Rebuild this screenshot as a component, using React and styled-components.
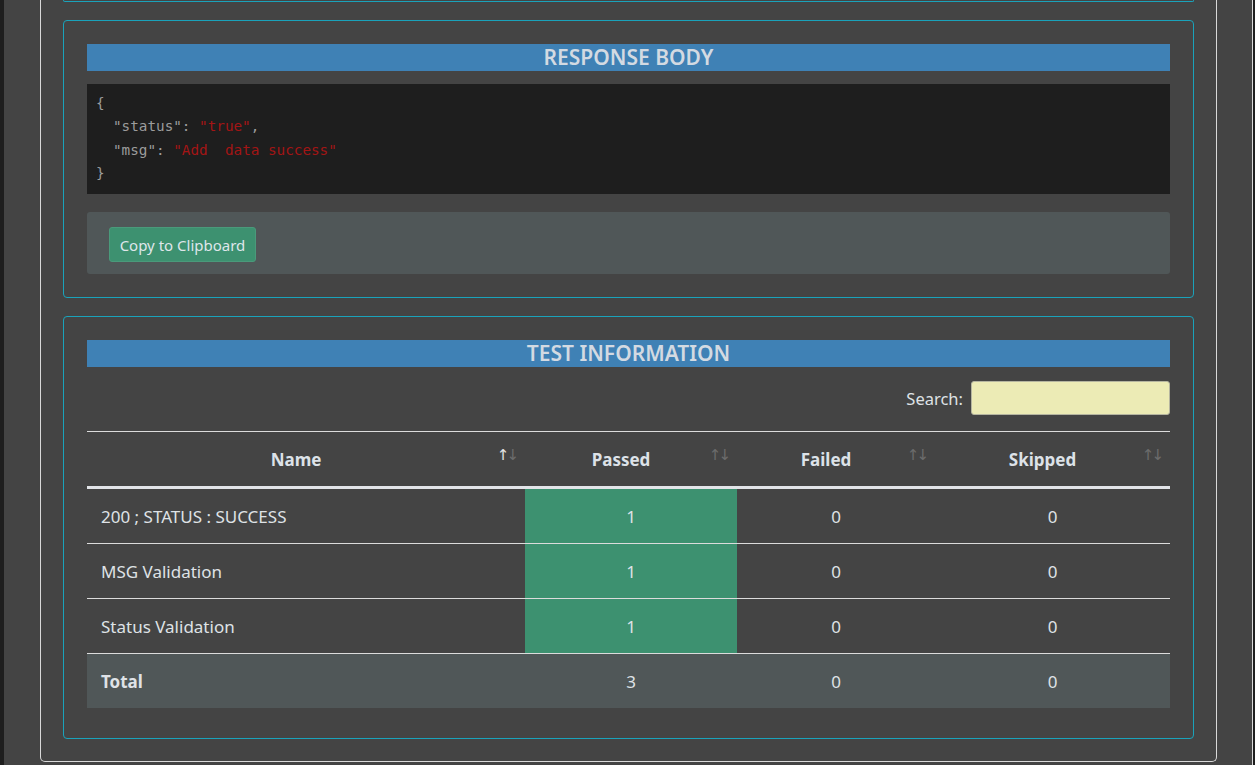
import styled, { createGlobalStyle } from "styled-components";

const GlobalStyle = createGlobalStyle`
    body {
        margin: 0;
        background-color: #1e1e1e;
        font-family: "Noto Sans", "Open Sans", sans-serif;
        color: #dfe2e6;
    }
`

const rows = [
    { name: "200 ; STATUS : SUCCESS", passed: 1, failed: 0, skipped: 0 },
    { name: "MSG Validation", passed: 1, failed: 0, skipped: 0 },
    { name: "Status Validation", passed: 1, failed: 0, skipped: 0 },
]

const columns = [
    { label: "Name", width: 438, active: true },
    { label: "Passed", width: 212 },
    { label: "Failed", width: 198 },
    { label: "Skipped", width: 235 },
]

export default function App() {
    return (
        <>
            <GlobalStyle />
            <Page>
                <Container>
                    <PrevCardEnd />
                    <Card>
                        <CardTitle>RESPONSE BODY</CardTitle>
                        <Code>
                            <Line>{"{"}</Line>
                            <Line indent>"status": <Str>"true"</Str>,</Line>
                            <Line indent>"msg": <Str>"Add&nbsp;&nbsp;data success"</Str></Line>
                            <Line>{"}"}</Line>
                        </Code>
                        <ButtonPanel>
                            <CopyButton>Copy to Clipboard</CopyButton>
                        </ButtonPanel>
                    </Card>
                    <Card>
                        <CardTitle>TEST INFORMATION</CardTitle>
                        <SearchRow>
                            <label>Search:</label>
                            <SearchInput />
                        </SearchRow>
                        <Table>
                            <colgroup>
                                {columns.map(c => <col key={c.label} style={{ width: c.width }} />)}
                            </colgroup>
                            <thead>
                                <tr>
                                    {columns.map(c => (
                                        <Th key={c.label}>
                                            {c.label}
                                            <SortIcon>
                                                <Arrow active={c.active}>↑</Arrow>
                                                <Arrow>↓</Arrow>
                                            </SortIcon>
                                        </Th>
                                    ))}
                                </tr>
                            </thead>
                            <tbody>
                                {rows.map(r => (
                                    <tr key={r.name}>
                                        <NameCell>{r.name}</NameCell>
                                        <Td passed>{r.passed}</Td>
                                        <Td>{r.failed}</Td>
                                        <Td>{r.skipped}</Td>
                                    </tr>
                                ))}
                                <TotalRow>
                                    <NameCell bold>Total</NameCell>
                                    <Td>3</Td>
                                    <Td>0</Td>
                                    <Td>0</Td>
                                </TotalRow>
                            </tbody>
                        </Table>
                    </Card>
                </Container>
            </Page>
        </>
    )
}

const Page = styled.div`
    margin-left: 4px;
    width: 1248px;
    min-height: 765px;
    background-color: #444444;
    border-right: 1px solid #d9d9d9;
`
const Container = styled.div`
    margin-left: 36px;
    width: 1131px;
    padding: 0 22px 22px;
    border: 1px solid #d9d9d9;
    border-top: none;
    border-radius: 0 0 5px 5px;
`
const PrevCardEnd = styled.div`
    height: 1px;
    border: 1px solid #1aa3bb;
    border-top: none;
    border-radius: 0 0 4px 4px;
`
const Card = styled.div`
    margin-top: 18px;
    padding: 23px;
    border: 1px solid #1aa3bb;
    border-radius: 4px;
    &:last-child {
        padding-bottom: 30px;
    }
`
const CardTitle = styled.div`
    height: 27px;
    line-height: 27px;
    background-color: #3f81b5;
    color: #d3dae2;
    text-align: center;
    font-size: 21px;
    font-weight: 600;
`
const Code = styled.pre`
    margin: 13px 0 0;
    height: 110px;
    box-sizing: border-box;
    padding: 8px 9px;
    background-color: #1e1e1e;
    font-family: "DejaVu Sans Mono", "Liberation Mono", monospace;
    font-size: 14.3px;
    line-height: 23.3px;
    color: #9c9c9c;
`
const Line = styled.div`
    padding-left: ${props => props.indent ? "17px" : "0"};
`
const Str = styled.span`
    color: #a31515;
`
const ButtonPanel = styled.div`
    margin-top: 18px;
    height: 62px;
    box-sizing: border-box;
    padding: 15px 22px;
    background-color: #505758;
    border-radius: 3px;
`
const CopyButton = styled.button`
    height: 35px;
    width: 147px;
    padding: 0;
    background-color: #3d9170;
    border: 1px solid #4a9a7b;
    border-radius: 3px;
    color: #dfe6ea;
    font-family: "Noto Sans", "Open Sans", sans-serif;
    font-size: 15px;
`
const SearchRow = styled.div`
    display: flex;
    justify-content: flex-end;
    align-items: center;
    gap: 8px;
    margin-top: 14px;
    font-size: 16.5px;
    label {
        color: #dfe2e6;
    }
`
const SearchInput = styled.input`
    width: 199px;
    height: 34px;
    box-sizing: border-box;
    background-color: #ecebb5;
    border: 1px solid #b5b5a0;
    border-radius: 3px;
`
const Table = styled.table`
    width: 100%;
    margin-top: 16px;
    border-collapse: collapse;
    table-layout: fixed;
    font-size: 17px;
    thead tr {
        border-top: 1px solid #dcdcdc;
        border-bottom: 3px solid #e2e4e8;
    }
`
const Th = styled.th`
    position: relative;
    height: 54px;
    padding: 0 30px 0 10px;
    text-align: center;
    font-weight: 700;
    color: #dde2e8;
`
const SortIcon = styled.span`
    position: absolute;
    right: 9px;
    top: 14px;
    font-family: "DejaVu Sans", sans-serif;
    font-size: 15px;
    font-weight: 400;
    letter-spacing: -3px;
`
const Arrow = styled.span`
    color: ${props => props.active ? "#e6e6e6" : "#6c6c6c"};
`
const Td = styled.td`
    height: 54px;
    padding: 0 10px;
    text-align: center;
    border-bottom: 1px solid #dcdcdc;
    background-color: ${props => props.passed ? "#3d9170" : "transparent"};
    color: #dfe2e6;
`
const NameCell = styled(Td)`
    text-align: left;
    padding-left: 14px;
    font-weight: ${props => props.bold ? 700 : 400};
`
const TotalRow = styled.tr`
    background-color: #505758;
    td {
        border-bottom: none;
    }
`
